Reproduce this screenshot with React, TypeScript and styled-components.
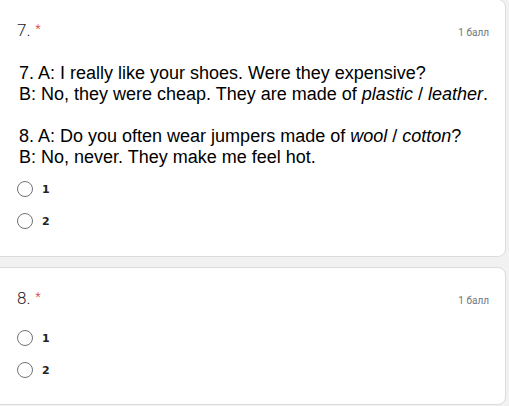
import React from "react";
import styled, { createGlobalStyle } from "styled-components";

const Global = createGlobalStyle`
  html, body { margin: 0; padding: 0; background: #f1f1f1; }
  body { width: 509px; height: 406px; overflow: hidden; font-family: "Liberation Sans", Arial, sans-serif; }
`;

const Page = styled.div`
  display: flex;
  flex-direction: column;
  gap: 10px;
  margin-top: -1px;
  margin-left: -10px;
  width: 516px;
`;

const Card = styled.div<{ $h: number }>`
  background: #fff;
  border: 1px solid #dadce0;
  border-radius: 8px;
  height: ${(p) => p.$h}px;
  box-sizing: border-box;
  padding: 20px 0 0 26px;
  display: flex;
  flex-direction: column;
`;

const Header = styled.div`
  display: flex;
  justify-content: space-between;
  align-items: baseline;
  height: 19px;
  line-height: 19px;
  padding-right: 16px;
`;

const QTitle = styled.div`
  font-family: Roboto, "Liberation Sans", sans-serif;
  font-size: 17px;
  font-weight: 300;
  color: #202124;
`;

const Star = styled.span`
  color: #d93025;
  margin-left: 5px;
  font-size: 12px;
  vertical-align: 3px;
`;

const Points = styled.div`
  font-family: Roboto, "Liberation Sans", sans-serif;
  font-size: 10px;
  color: #70757a;
`;

const Body = styled.div`
  margin-top: 24px;
  font-size: 18px;
  line-height: 21px;
  color: #000;
  padding-left: 2px;
`;

const Para = styled.p<{ $last?: boolean }>`
  margin: 0 0 ${(p) => (p.$last ? 0 : 21)}px 0;
`;

const Options = styled.div<{ $mt: number }>`
  display: flex;
  flex-direction: column;
  gap: 12px;
  margin-top: ${(p) => p.$mt}px;
`;

const Option = styled.label`
  display: flex;
  align-items: center;
  gap: 9px;
  height: 20px;
`;

const Radio = styled.span`
  width: 16px;
  height: 16px;
  border: 1px solid #6f7378;
  border-radius: 50%;
  box-sizing: border-box;
`;

const OptLabel = styled.span`
  font-family: "DejaVu Sans", "Liberation Sans", sans-serif;
  font-weight: bold;
  font-size: 11px;
  color: #202124;
`;

export default function App() {
  return (
    <>
      <Global />
      <Page>
        <Card $h={258}>
          <Header>
            <QTitle>
              7.<Star>*</Star>
            </QTitle>
            <Points>1 балл</Points>
          </Header>
          <Body>
            <Para>
              7. A: I really like your shoes. Were they expensive?
              <br />
              B: No, they were cheap. They are made of <i>plastic</i> / <i>leather</i>.
            </Para>
            <Para $last>
              8. A: Do you often wear jumpers made of <i>wool</i> / <i>cotton</i>?
              <br />
              B: No, never. They make me feel hot.
            </Para>
          </Body>
          <Options $mt={11}>
            <Option>
              <Radio />
              <OptLabel>1</OptLabel>
            </Option>
            <Option>
              <Radio />
              <OptLabel>2</OptLabel>
            </Option>
          </Options>
        </Card>
        <Card $h={138}>
          <Header>
            <QTitle>
              8.<Star>*</Star>
            </QTitle>
            <Points>1 балл</Points>
          </Header>
          <Options $mt={21}>
            <Option>
              <Radio />
              <OptLabel>1</OptLabel>
            </Option>
            <Option>
              <Radio />
              <OptLabel>2</OptLabel>
            </Option>
          </Options>
        </Card>
      </Page>
    </>
  );
}
